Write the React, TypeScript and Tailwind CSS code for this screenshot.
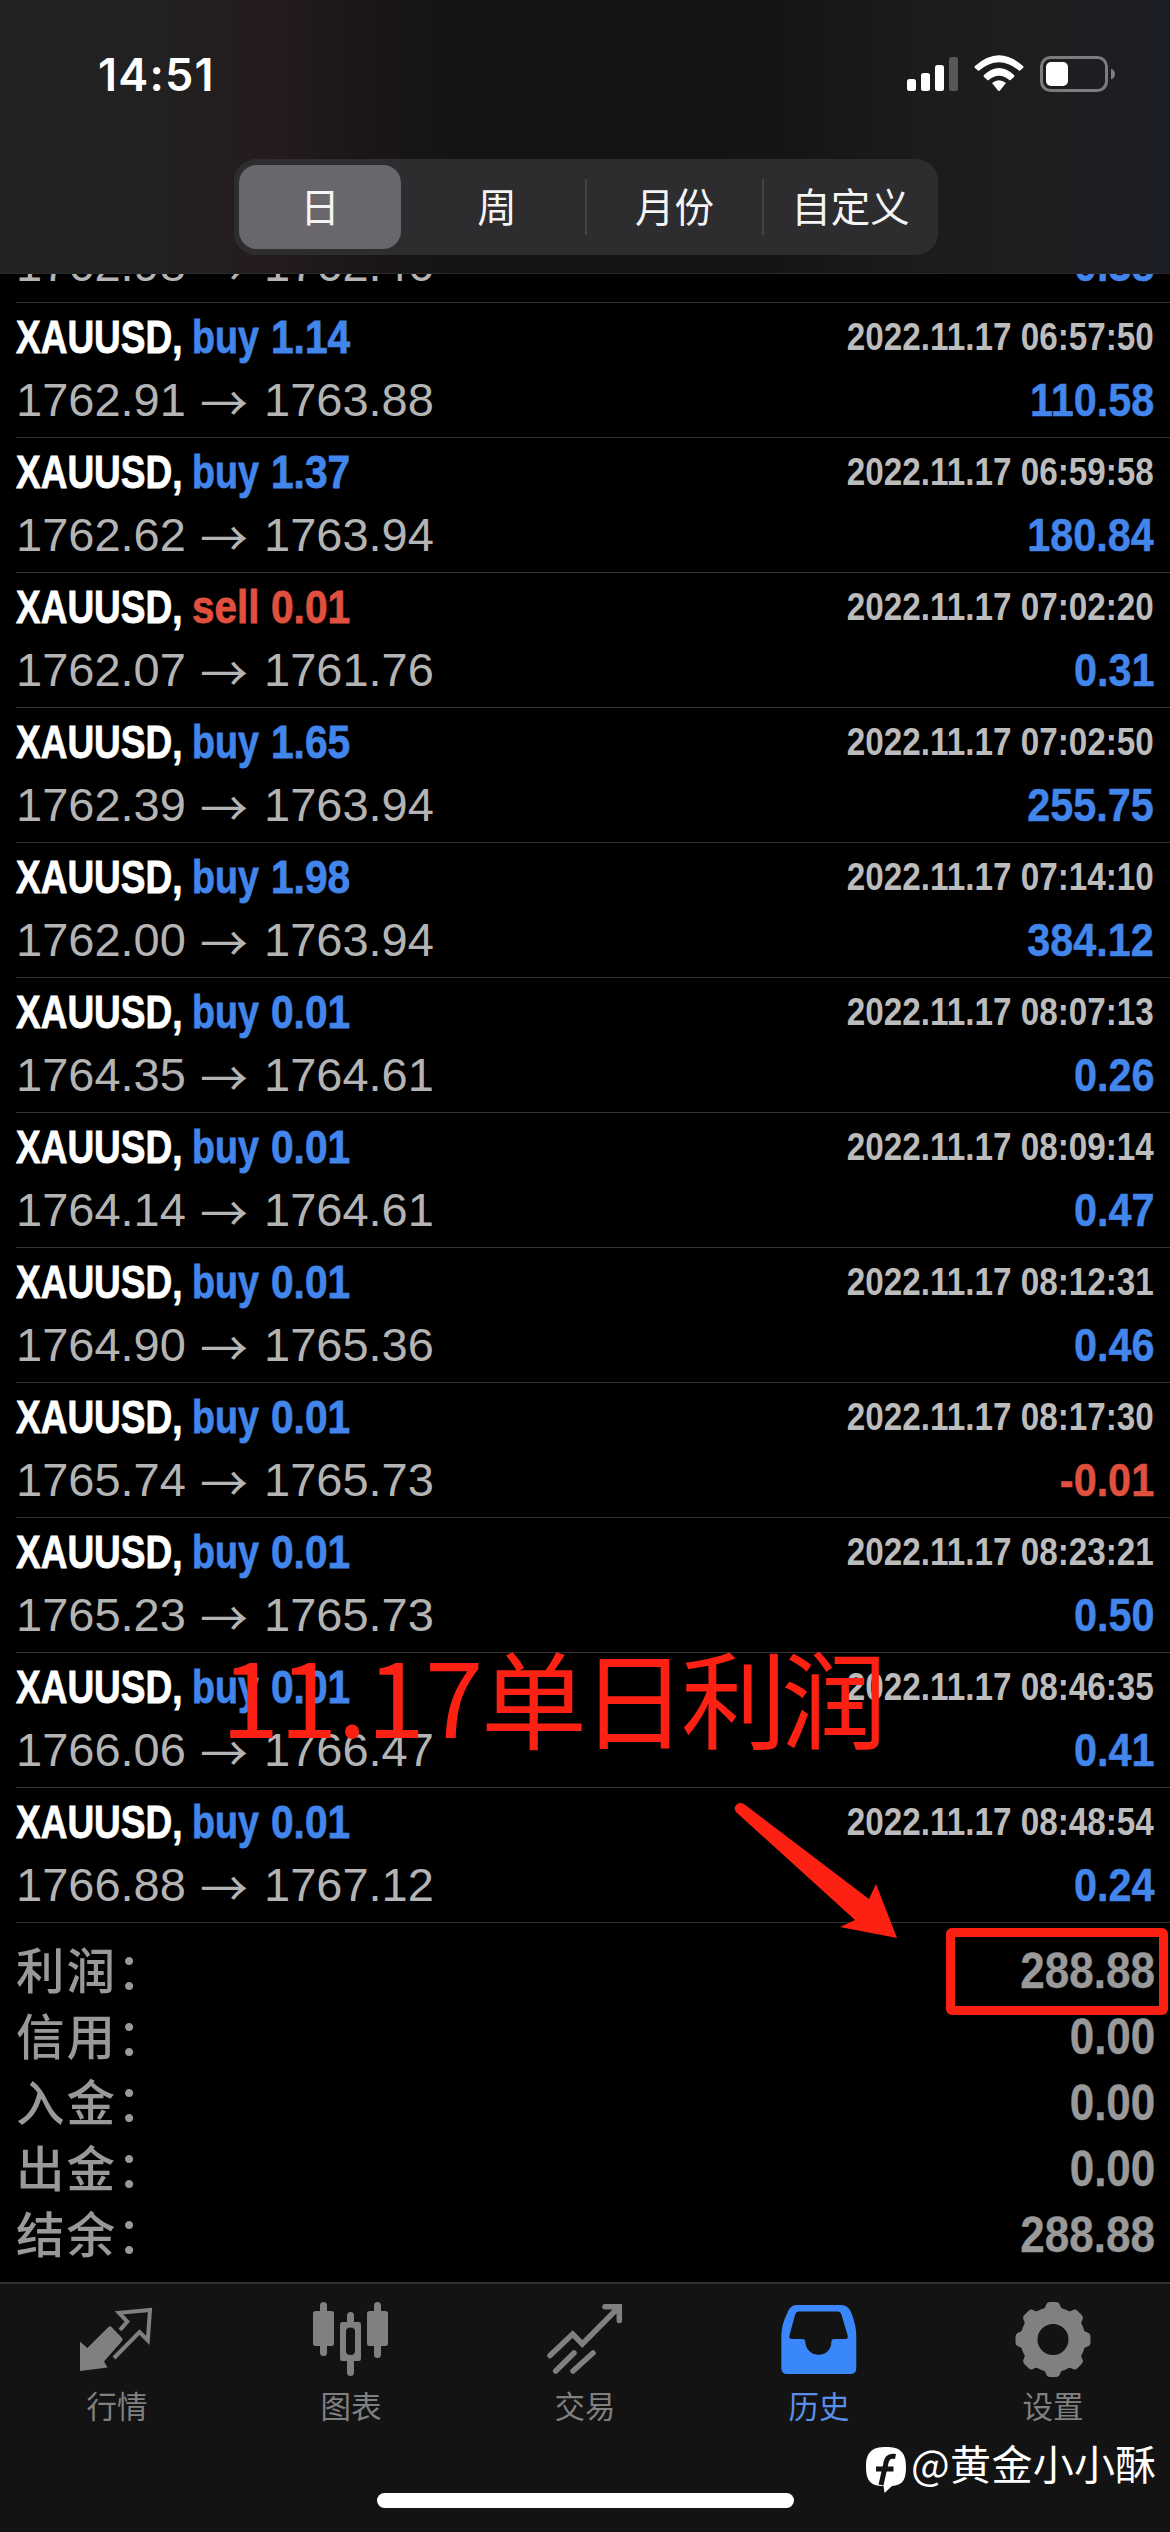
import type { ReactNode } from "react";

type Trade = { side: "buy" | "sell"; lot: string; from: string; to: string; time: string; profit: string };

const trades: Trade[] = [
  { side: "buy", lot: "1.14", from: "1762.91", to: "1763.88", time: "2022.11.17 06:57:50", profit: "110.58" },
  { side: "buy", lot: "1.37", from: "1762.62", to: "1763.94", time: "2022.11.17 06:59:58", profit: "180.84" },
  { side: "sell", lot: "0.01", from: "1762.07", to: "1761.76", time: "2022.11.17 07:02:20", profit: "0.31" },
  { side: "buy", lot: "1.65", from: "1762.39", to: "1763.94", time: "2022.11.17 07:02:50", profit: "255.75" },
  { side: "buy", lot: "1.98", from: "1762.00", to: "1763.94", time: "2022.11.17 07:14:10", profit: "384.12" },
  { side: "buy", lot: "0.01", from: "1764.35", to: "1764.61", time: "2022.11.17 08:07:13", profit: "0.26" },
  { side: "buy", lot: "0.01", from: "1764.14", to: "1764.61", time: "2022.11.17 08:09:14", profit: "0.47" },
  { side: "buy", lot: "0.01", from: "1764.90", to: "1765.36", time: "2022.11.17 08:12:31", profit: "0.46" },
  { side: "buy", lot: "0.01", from: "1765.74", to: "1765.73", time: "2022.11.17 08:17:30", profit: "-0.01" },
  { side: "buy", lot: "0.01", from: "1765.23", to: "1765.73", time: "2022.11.17 08:23:21", profit: "0.50" },
  { side: "buy", lot: "0.01", from: "1766.06", to: "1766.47", time: "2022.11.17 08:46:35", profit: "0.41" },
  { side: "buy", lot: "0.01", from: "1766.88", to: "1767.12", time: "2022.11.17 08:48:54", profit: "0.24" },
];

const totals = [
  ["利润：", "288.88"],
  ["信用：", "0.00"],
  ["入金：", "0.00"],
  ["出金：", "0.00"],
  ["结余：", "288.88"],
];

function PriceLine({ from, to, profit }: { from: string; to: string; profit: string }) {
  const color = profit.startsWith("-") ? "text-[#e0503f]" : "text-[#4285eb]";
  return (
    <div className="flex h-[60px] items-center justify-between">
      <div className="flex text-[47px] leading-[60px] text-[#b4b4b4]">
        <span className="w-[184px]">{from}</span>
        <span className="w-[64px] font-['Noto_Sans_CJK_SC'] text-[48px]">→</span>
        <span>{to}</span>
      </div>
      <span className={`inline-block origin-right scale-x-[0.88] text-[47px] leading-[60px] font-bold [-webkit-text-stroke:0.5px] ${color}`}>
        {profit}
      </span>
    </div>
  );
}

function TradeRow({ t }: { t: Trade }) {
  const sideColor = t.side === "buy" ? "text-[#4285eb] [-webkit-text-stroke:0.8px]" : "text-[#e0503f] [-webkit-text-stroke:0.8px]";
  return (
    <div className="ml-4 h-[135px] shrink-0 border-b border-[#333] pr-4 whitespace-nowrap">
      <div className="flex h-[67px] items-center justify-between font-bold">
        <div className="flex text-[47px] leading-[60px]">
          <div className="w-[176px]">
            <span className="inline-block origin-left scale-x-[0.787] text-white [-webkit-text-stroke:0.8px]">XAUUSD,</span>
          </div>
          <div className={`w-[79px] ${sideColor}`}>
            <span className={`inline-block origin-left ${t.side === "buy" ? "scale-x-[0.8]" : "scale-x-[0.86]"}`}>{t.side}</span>
          </div>
          <div className={sideColor}>
            <span className="inline-block origin-left scale-x-[0.865]">{t.lot}</span>
          </div>
        </div>
        <span className="inline-block origin-right scale-x-[0.875] text-[38px] leading-[60px] text-[#bcbcbc]">{t.time}</span>
      </div>
      <PriceLine from={t.from} to={t.to} profit={t.profit} />
    </div>
  );
}

function Tab({ label, active, children }: { label: string; active?: boolean; children: ReactNode }) {
  return (
    <div className={`flex w-[234px] flex-col items-center pt-[18px] ${active ? "text-[#3a87fb]" : "text-[#808080]"}`}>
      <svg viewBox="0 0 80 80" className="h-20 w-20" fill="currentColor">{children}</svg>
      <span className={`-mt-[1px] font-['Noto_Sans_CJK_SC'] text-[30.5px] leading-[48px] ${active ? "text-[#5a8fe8]" : ""}`}>{label}</span>
    </div>
  );
}

const cog = Array.from({ length: 8 }, (_, i) => i * 45);

export default function App() {
  return (
    <div className="relative flex h-[2532px] w-[1170px] flex-col overflow-hidden bg-black font-['Liberation_Sans','Noto_Sans_CJK_SC',sans-serif]">
      <header className="flex h-[273px] shrink-0 flex-col bg-[linear-gradient(90deg,#222222_0%,#222121_13%,#241b1c_23%,#1a1616_32%,#131313_41%,#141414_65%,#1b1c1e_80%,#1e1e20_90%,#1b1d24_100%)]">
        <div className="flex h-[159px] items-start justify-between pr-[54px] pl-[98px]">
          <span className="pt-[48px] font-['Inter'] text-[45px] leading-[54px] font-semibold tracking-[1.2px] text-white">14:51</span>
          <div className="mt-[50px] flex">
            <svg width="212" height="50" viewBox="904 50 212 50">
              <rect x="907" y="79" width="9" height="12" rx="2.5" fill="#fff" />
              <rect x="921" y="73" width="9" height="18" rx="2.5" fill="#fff" />
              <rect x="935" y="65" width="9" height="26" rx="2.5" fill="#fff" />
              <rect x="949" y="57" width="9" height="34" rx="2.5" fill="#57575a" />
              <path d="M975 66Q999 44.500 1023 66Q1024 67 1023 68L1019.500 71Q999 53.500 978.500 71L975 68Q974 67 975 66Z" fill="#fff" />
              <path d="M984 75Q999 61 1014 75Q1015 76 1014 77L1010 80.500Q999 71 988 80.500L984 77Q983 76 984 75Z" fill="#fff" />
              <path d="M992 83Q999 77.500 1006 83L1000 90.500Q999 91.500 998 90.500Z" fill="#fff" />
              <rect x="1041.500" y="57.500" width="65" height="33" rx="9" fill="none" stroke="#7c7c7e" strokeWidth="3" />
              <rect x="1046" y="62" width="22" height="24" rx="5" fill="#fff" />
              <path d="M1111 68.500Q1115 70 1115 74T1111 79.500Z" fill="#7c7c7e" />
            </svg>
          </div>
        </div>
        <div className="ml-[234px] flex h-24 w-[704px] items-center rounded-[22px] bg-[#2d2d2f] p-[5px] font-['Noto_Sans_CJK_SC'] text-[39.5px] leading-[56px] text-[#f4f4f4]">
          <div className="flex h-[84px] w-[162px] shrink-0 items-center justify-center rounded-[18px] bg-[#69676b] pb-[5px]">日</div>
          <div className="flex h-14 w-[186px] shrink-0 items-center justify-center border-r-2 border-[#434346] pb-[5px] pl-2">周</div>
          <div className="flex h-14 w-[177px] shrink-0 items-center justify-center border-r-2 border-[#434346] pb-[5px]">月份</div>
          <div className="flex h-14 flex-1 items-center justify-center pb-[5px] pl-1">自定义</div>
        </div>
      </header>

      <section className="flex h-[1650px] shrink-0 flex-col justify-end overflow-hidden border-t border-[#2a2a2a]">
        <div className="ml-4 h-[68px] shrink-0 border-b border-[#333] pr-4 whitespace-nowrap">
          <PriceLine from="1762.98" to="1762.46" profit="0.38" />
        </div>
        {trades.map((t) => (
          <TradeRow key={t.time} t={t} />
        ))}
      </section>

      <section className="h-[359px] shrink-0 pt-[15px] pr-[15px] pl-4 text-[#999]">
        {totals.map(([label, value]) => (
          <div key={label} className="flex h-[66px] items-center justify-between">
            <span className="pb-[6px] font-['Noto_Sans_CJK_SC'] text-[48.5px] leading-[66px] font-medium tracking-[2px]">{label}</span>
            <span className="inline-block origin-right scale-x-[0.88] text-[50px] leading-[66px] font-bold [-webkit-text-stroke:0.4px]">{value}</span>
          </div>
        ))}
      </section>

      <nav className="flex h-[250px] shrink-0 border-t-2 border-[#303030] bg-[#131313]">
        <Tab label="行情">
          <path d="M3 39.500L10.300 46L31.500 25Q33 23.500 34.500 25L45 36Q46.500 37.500 45 39L27 59.500L30.500 65.500L3 69Z" />
          <path d="M43 28L50.300 19.500L42 10.800L73 8L70.800 38.500L62.500 30L37 56" fill="none" stroke="currentColor" strokeWidth="4" />
        </Tab>
        <Tab label="图表">
          <rect x="2" y="9" width="21" height="35" rx="2.500" /><rect x="9" y="0" width="7" height="54" rx="3.500" />
          <rect x="56" y="9" width="21" height="35" rx="2.500" /><rect x="63" y="0" width="7" height="56" rx="3.500" />
          <path fillRule="evenodd" d="M31 20H48Q50 20 50 22.500V56.500Q50 59 48 59H31Q29 59 29 56.500V22.500Q29 20 31 20ZM39.500 25.500Q35 25.500 35 29V49Q35 53 39.500 53T44 49V29Q44 25.500 39.500 25.500Z" />
          <rect x="36" y="10" width="7" height="14" rx="3.500" /><rect x="36" y="55" width="7" height="19" rx="3.500" />
        </Tab>
        <Tab label="交易">
          <g fill="none" stroke="currentColor" strokeWidth="5.500" strokeLinecap="round">
            <path d="M5 53.500L27.700 32L37.300 42L72 7M60 4.700H74.300V18.500" />
            <path d="M10.700 69L29 51M28 69L48 51" />
          </g>
        </Tab>
        <Tab label="历史" active>
          <path transform="translate(-0.700 0)" fillRule="evenodd" d="M18 3H63Q70 3 73 11Q78 23 78 34V66Q78 72 72 72H9Q3 72 3 66V34Q3 23 9 11Q12 3 18 3ZM20 9.500Q18 9.500 17 12L11 34Q10.500 37 14 37H24Q27 37 27 40C28 57 53 57 53 40Q53 37 56 37H67Q70 37 69.500 34L63 12Q62 9.500 60 9.500Z" />
        </Tab>
        <Tab label="设置">
          <circle cx="40" cy="37.500" r="24" fill="none" stroke="currentColor" strokeWidth="17" />
          {cog.map((a) => (
            <path key={a} transform={`rotate(${a} 40 37.500)`} d="M28 9Q32 7 33 3Q34 0 37 0H43Q46 0 47 3Q48 7 52 9Z" />
          ))}
        </Tab>
      </nav>

      <div className="absolute bottom-[24px] left-[377px] h-[15px] w-[417px] rounded-full bg-white" />

      <div className="absolute top-[1635px] left-[221px] flex font-['Noto_Sans_CJK_SC'] text-[106px] leading-[120px] whitespace-nowrap text-[#fc2113]">
        <span className="-mt-[3px] w-[260px] text-[105px]">11.17</span>
        <span className="tracking-[-6px]">单日利润</span>
      </div>
      <svg className="absolute top-[1800px] left-[730px]" width="180" height="150" viewBox="730 1800 180 150">
        <path d="M735 1807Q738 1801 744 1804L869 1899L876 1884L897 1938L840 1927L855 1920L736 1812Q734 1809 735 1807Z" fill="#fc2113" />
      </svg>
      <div className="absolute top-[1928px] left-[946px] h-[87px] w-[222px] rounded-[6px] border-[9px] border-[#fc2113]" />

      <div className="absolute top-[2433px] left-[866px] flex items-start text-white">
        <svg width="42" height="48" viewBox="0 0 42 48" className="mt-[14px]">
          <path d="M20 0C34 0 40 5 40 20C40 34 36 38 26 39L18.500 46L17.500 39C5 39 0 34 0 20C0 5 6 0 20 0Z" fill="#fff" />
          <path d="M29.500 9.500C22 8 20.500 12 19.500 18L15 38M10 22H27.500" fill="none" stroke="#131313" strokeWidth="5" />
        </svg>
        <span className="ml-[3px] font-['Noto_Sans_CJK_SC'] text-[41px] leading-[58px] tracking-[0.3px]">@黄金小小酥</span>
      </div>
    </div>
  );
}
